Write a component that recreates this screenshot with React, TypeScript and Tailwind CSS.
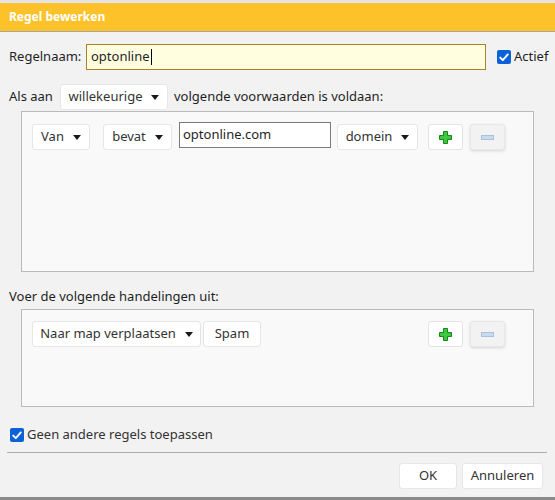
import React from "react";

function Caret() {
  return (
    <svg width="8" height="5" viewBox="0 0 8 5" className="ml-[9px]">
      <path d="M0 0h8L4 5z" fill="#1a1a1a" />
    </svg>
  );
}

function Dropdown({ label, w }: { label: string; w: string }) {
  return (
    <div
      className={`${w} h-[26px] flex items-center justify-center bg-white border border-[#e6e6e6] rounded-[3px] text-[#333]`}
    >
      <span>{label}</span>
      <Caret />
    </div>
  );
}

function Check() {
  return (
    <span className="w-[14px] h-[14px] rounded-[2px] bg-[#0b61d8] flex items-center justify-center">
      <svg width="10" height="9" viewBox="0 0 10 9">
        <path d="M1.2 4.6l2.6 2.6L8.8 1.4" fill="none" stroke="#fff" strokeWidth="1.9" strokeLinecap="round" strokeLinejoin="round" />
      </svg>
    </span>
  );
}

function PlusMinus() {
  return (
    <div className="flex gap-[7px]">
      <div className="w-[35px] h-[26px] bg-white border border-[#e4e4e4] rounded-[3px] flex items-center justify-center">
        <svg width="13" height="13" viewBox="0 0 13 13">
          <path
            d="M4.5 0.5h4v4h4v4h-4v4h-4v-4h-4v-4h4z"
            fill="#3cc83c"
            stroke="#16861c"
            strokeWidth="1"
          />
        </svg>
      </div>
      <div className="w-[35px] h-[26px] bg-[#f2f2f2] border border-[#e8e8e8] rounded-[3px] shadow-[0_1px_3px_rgba(0,0,0,0.15)] flex items-center justify-center">
        <svg width="13" height="5" viewBox="0 0 13 5">
          <rect x="0.5" y="0.5" width="12" height="4" fill="#c7daf0" stroke="#a9c1dd" strokeWidth="1" />
        </svg>
      </div>
    </div>
  );
}

export default function App() {
  return (
    <div className="w-[555px] h-[500px] bg-[#f2f2f2] flex flex-col text-[13px] text-[#1f1f1f] font-['Noto_Sans',sans-serif] overflow-hidden">
      <div className="h-[3px] bg-[#e4e4e4]" />
      <div className="h-[29px] bg-[#fdc22a] border-b border-[#a6a6a6] flex items-center px-[9px]">
        <span className="text-white font-bold text-[12px]">Regel bewerken</span>
      </div>

      <div className="flex items-center mt-[12px] h-[26px]">
        <span className="ml-[9px] w-[77px]">Regelnaam:</span>
        <div className="w-[400px] h-[26px] bg-[#ffffe0] border border-[#a9822b] flex items-center pl-[4px]">
          optonline<span className="w-px h-[16px] bg-black ml-px" />
        </div>
        <label className="ml-[11px] flex items-center gap-[3px]">
          <Check />
          <span>Actief</span>
        </label>
      </div>

      <div className="flex items-center mt-[14px] h-[26px]">
        <span className="ml-[9px] w-[51px]">Als aan</span>
        <Dropdown label="willekeurige" w="w-[108px]" />
        <span className="ml-[6px]">volgende voorwaarden is voldaan:</span>
      </div>

      <div className="ml-[21px] w-[513px] h-[161px] mt-[1px] bg-[#f9f9f9] border border-[#bbbbbb] flex items-start pt-[10px] pl-[10px]">
        <div className="mt-[2px]">
          <Dropdown label="Van" w="w-[58px]" />
        </div>
        <div className="ml-[13px] mt-[2px]">
          <Dropdown label="bevat" w="w-[69px]" />
        </div>
        <div className="ml-[7px] w-[152px] h-[26px] bg-white border border-[#7a7a7a] flex items-center pl-[3px]">
          optonline.com
        </div>
        <div className="ml-[6px] mt-[2px]">
          <Dropdown label="domein" w="w-[81px]" />
        </div>
        <div className="ml-[10px] mt-[2px]">
          <PlusMinus />
        </div>
      </div>

      <div className="ml-[9px] mt-[16px] h-[18px] flex items-center">Voer de volgende handelingen uit:</div>

      <div className="ml-[21px] w-[513px] h-[98px] mt-[3px] bg-[#f9f9f9] border border-[#bbbbbb] flex items-start pt-[11px] pl-[10px]">
        <Dropdown label="Naar map verplaatsen" w="w-[169px]" />
        <div className="ml-[2px] w-[58px] h-[26px] bg-white border border-[#e6e6e6] rounded-[3px] flex items-center justify-center text-[#333]">
          Spam
        </div>
        <div className="ml-[167px]">
          <PlusMinus />
        </div>
      </div>

      <label className="ml-[10px] mt-[19px] h-[18px] flex items-center gap-[3px] text-[#333]">
        <Check />
        <span>Geen andere regels toepassen</span>
      </label>

      <div className="ml-[7px] w-[540px] mt-[8px] border-t border-[#acacac]" />

      <div className="flex justify-end gap-[5px] mr-[12px] mt-[10px]">
        <div className="w-[58px] h-[26px] bg-white border border-[#e6e6e6] rounded-[3px] flex items-center justify-center text-[#333]">
          OK
        </div>
        <div className="w-[81px] h-[26px] bg-white border border-[#e6e6e6] rounded-[3px] flex items-center justify-center text-[#333]">
          Annuleren
        </div>
      </div>

      <div className="mt-auto h-[3px] bg-[#8a8a8a]" />
    </div>
  );
}
